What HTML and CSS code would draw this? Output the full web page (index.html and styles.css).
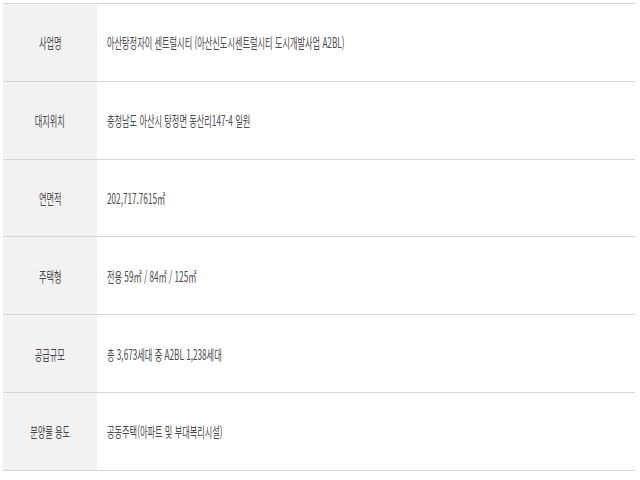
FILE: index.html
```html
<!DOCTYPE html>
<html lang="ko">
<head>
<meta charset="utf-8">
<link rel="stylesheet" href="styles.css">
</head>
<body>
<div class="info">
  <div class="row"><div class="th"><span class="t">사업명</span></div><div class="td"><span class="t">아산탕정자이 센트럴시티 (아산신도시센트럴시티 도시개발사업 A2BL)</span></div></div>
  <div class="row"><div class="th"><span class="t">대지위치</span></div><div class="td"><span class="t">충청남도 아산시 탕정면 동산리147-4 일원</span></div></div>
  <div class="row"><div class="th"><span class="t">연면적</span></div><div class="td"><span class="t">202,717.7615㎡</span></div></div>
  <div class="row"><div class="th"><span class="t">주택형</span></div><div class="td"><span class="t">전용 59㎡ / 84㎡ / 125㎡</span></div></div>
  <div class="row"><div class="th"><span class="t">공급규모</span></div><div class="td"><span class="t">총 3,673세대 중 A2BL 1,238세대</span></div></div>
  <div class="row"><div class="th"><span class="t">분양물 용도</span></div><div class="td"><span class="t">공동주택(아파트 및 부대복리시설)</span></div></div>
</div>
</body>
</html>
```

FILE: styles.css
```css
html, body {
  margin: 0;
  padding: 0;
  background: #fff;
}
body {
  font-family: "Noto Sans CJK KR", "Noto Sans", sans-serif;
  font-size: 14px;
  color: #4a4a4a;
}
.info {
  margin: 3px 5px 0 3px;
  border-top: 1px solid #d6d6d6;
}
.row {
  display: grid;
  grid-template-columns: 94px 1fr;
  height: 76.8px;
  border-bottom: 1px solid #d6d6d6;
}
.th {
  background: #f2f2f2;
  display: flex;
  align-items: center;
  justify-content: center;
}
.td {
  display: flex;
  align-items: center;
  padding-left: 10px;
}
.t {
  display: inline-block;
  white-space: nowrap;
  line-height: 1;
  transform: scaleX(0.585);
}
.th .t { transform-origin: center center; }
.td .t { transform-origin: left center; }
```
